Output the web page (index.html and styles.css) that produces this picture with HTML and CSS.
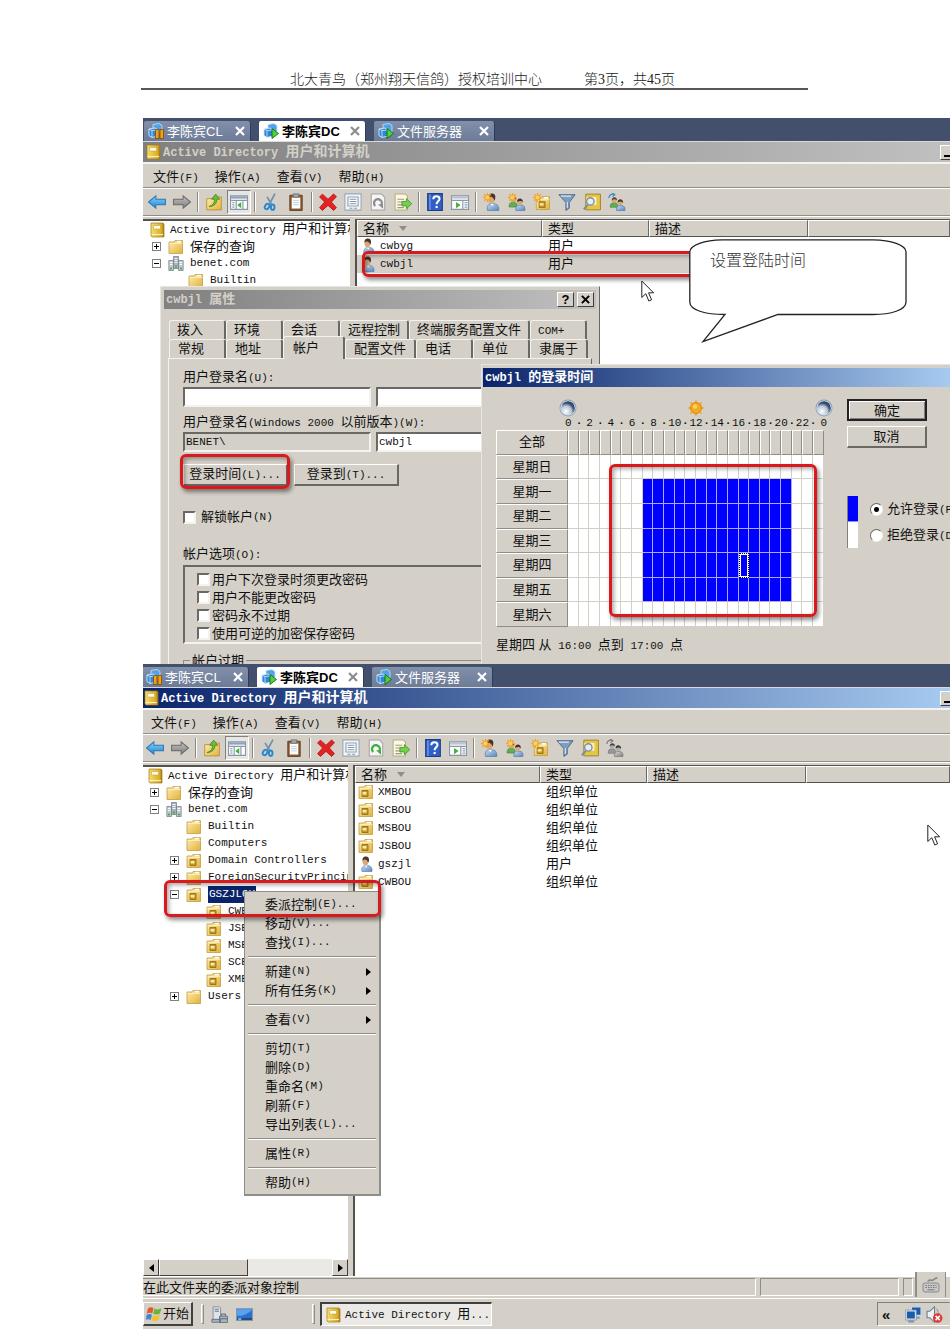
FILE: index.html
```html
<!DOCTYPE html>
<html lang="zh-CN">
<head>
<meta charset="utf-8">
<title>北大青鸟（郑州翔天信鸽）授权培训中心</title>
<link rel="stylesheet" href="styles.css">
</head>
<body>
<svg class="sprite" aria-hidden="true">
  <defs>
    <linearGradient id="gGold" x1="0" y1="0" x2="1" y2="1"><stop offset="0" stop-color="#fdeeb0"/><stop offset="1" stop-color="#e2b23c"/></linearGradient>
    <linearGradient id="gBook" x1="0" y1="0" x2="1" y2="0"><stop offset="0" stop-color="#f5dd6a"/><stop offset=".8" stop-color="#dcae2c"/><stop offset="1" stop-color="#a87a10"/></linearGradient>
    <linearGradient id="gBlue" x1="0" y1="0" x2="0" y2="1"><stop offset="0" stop-color="#8ad4fb"/><stop offset="1" stop-color="#1f83d4"/></linearGradient>
    <linearGradient id="gGray" x1="0" y1="0" x2="0" y2="1"><stop offset="0" stop-color="#c4c4c4"/><stop offset="1" stop-color="#7c7c7c"/></linearGradient>
    <linearGradient id="gBody" x1="0" y1="0" x2="1" y2="1"><stop offset="0" stop-color="#c6dcf4"/><stop offset="1" stop-color="#5a86bd"/></linearGradient>
    <radialGradient id="gMoon" cx=".35" cy=".75" r=".8"><stop offset="0" stop-color="#fff"/><stop offset=".5" stop-color="#b8c3d2"/><stop offset=".75" stop-color="#3c5478"/><stop offset="1" stop-color="#22375a"/></radialGradient>
  </defs>
  <symbol id="cubes" viewBox="0 0 16 16">
    <path d="M5 1.500l6-1 3 2v6l-6 1-3-2z" fill="#4fa3e6" stroke="#c9e7fb" stroke-width=".8"/>
    <path d="M1 6l6-1 3 2v6l-6 1.500-3-2z" fill="#2f86d8" stroke="#d3ecfc" stroke-width=".9"/>
    <path d="M1 6l3 1.500 6-.5M4 7.500v7" fill="none" stroke="#d3ecfc" stroke-width=".8"/>
  </symbol>
  <symbol id="vm-pause" viewBox="0 0 16 16"><use href="#cubes"/><path d="M7.500 6.500h3.500v9h-3.500zM12 6.500h3.500v9h-3.500z" fill="#f2a01c" stroke="#7d4a02" stroke-width=".8"/></symbol>
  <symbol id="vm-play" viewBox="0 0 16 16"><use href="#cubes"/><path d="M9 5.500l6.500 5-6.500 5z" fill="#4fd23c" stroke="#176a10" stroke-width=".9"/></symbol>
  <symbol id="close" viewBox="0 0 10 10"><path d="M1 1l8 8M9 1l-8 8" stroke="currentColor" stroke-width="2.200"/></symbol>
  <symbol id="book" viewBox="0 0 16 16"><path d="M2 1h12l1 1v13H3l-1-1z" fill="url(#gBook)" stroke="#a07a1a" stroke-width=".7"/><path d="M2.500 12.500h11.500" stroke="#fff2b8"/><path d="M4.500 3.500h7v3.500h-7z" fill="#fffce8" stroke="#c8a544" stroke-width=".6"/></symbol>
  <symbol id="folder" viewBox="0 0 16 16"><path d="M1 3h5l1-1.500h7.500V14.500H1z" fill="url(#gGold)" stroke="#c79a3d" stroke-width=".8"/><path d="M9 1.800h4v1.700H9z" fill="#fff"/><path d="M1.500 4.500h13" stroke="#fff5cd" stroke-width=".7"/></symbol>
  <symbol id="ou" viewBox="0 0 16 16"><use href="#folder"/><path d="M4 6.500h6v6H4z" fill="#c69826" stroke="#8d6813" stroke-width=".8"/><path d="M4.500 8h4v2.500h-4z" fill="#fbe9a4"/></symbol>
  <symbol id="domain" viewBox="0 0 16 16"><path d="M5.500.5h5v12h-5z" fill="#a7b0ba" stroke="#6d7884" stroke-width=".7"/><path d="M.8 4.500h4.700v10H.8zM10.500 4.500h4.700v10h-4.700z" fill="#c2c9d1" stroke="#6d7884" stroke-width=".7"/><path d="M6.500 2.500h3M6.500 4.500h3M6.500 6.500h3M1.800 6.500h2.700M1.800 8.500h2.700M11.500 6.500h2.700M11.500 8.500h2.700" stroke="#fff" stroke-width=".9"/><path d="M2 11.500h2v2H2zM7 9.500h2v2H7zM12 11.500h2v2h-2z" fill="#46b548"/></symbol>
  <symbol id="user" viewBox="0 0 16 16"><path d="M4 15.500c-1-4 1-6.500 5-6 4 0 5.500 2.500 5 6z" fill="url(#gBody)" stroke="#4e77a8" stroke-width=".6"/><path d="M6.500 9.500l2 2L9.500 9.500z" fill="#fff"/><ellipse cx="7.500" cy="5.500" rx="2.900" ry="3.700" fill="#d9a877"/><path d="M4.700 5C4 1.500 6 .3 8.300.4c3 .2 3.300 3.600 2 6.200-.8-1-.9-2.800-3.300-3-.8 0-1.600.4-2.300 1.400z" fill="#4a3626"/></symbol>
  <symbol id="group" viewBox="0 0 16 16"><path d="M1 12.500c-.3-3 1-4.500 4-4.300 2.500 0 3.500 1.500 3 4.300z" fill="#5fae52" stroke="#3e7c38" stroke-width=".5"/><circle cx="4.800" cy="6" r="2.300" fill="#d9a877"/><path d="M2.500 6c0-4 5-4 5 0C6 4.500 4 4.500 2.500 6z" fill="#57402c"/><path d="M7 15.500c-.3-3.500 1-5 4.300-4.700 3 0 4.200 1.700 3.700 4.700z" fill="url(#gBody)" stroke="#4e77a8" stroke-width=".6"/><circle cx="10.500" cy="8" r="2.400" fill="#d9a877"/><path d="M8 8c0-4.300 5.500-4 5.300.3-1.300-1.600-3.300-1.700-5.300-.3z" fill="#4a3020"/></symbol>
  <symbol id="spark" viewBox="0 0 16 16"><path d="M4 0v8M0 4h8M1.200 1.200l5.600 5.600M6.800 1.200L1.200 6.800" stroke="#f0a32b" stroke-width="1.200"/><circle cx="4" cy="4" r="1.700" fill="#ffd257"/></symbol>
  <symbol id="new-user" viewBox="0 0 16 16"><use href="#user"/><use href="#spark"/></symbol>
  <symbol id="new-group" viewBox="0 0 16 16"><use href="#group"/><use href="#spark"/></symbol>
  <symbol id="new-ou" viewBox="0 0 16 16"><svg x="2" y="2" width="14" height="14" viewBox="0 0 16 16"><use href="#ou"/></svg><use href="#spark"/></symbol>
  <symbol id="add-group" viewBox="0 0 16 16"><svg x="1" y="1" width="15" height="15" viewBox="0 0 16 16"><use href="#group"/></svg><path d="M.8 4.500C1 1.500 3 .8 5 1.200M3.800 0L6 1.500 4 3.200" fill="none" stroke="#3d86c4" stroke-width="1.100"/></symbol>
  <symbol id="back" viewBox="0 0 16 16"><path d="M.5 8L7 2.500v3h8.500v5H7v3z" fill="url(#gBlue)" stroke="#2b78b5" stroke-width=".9"/></symbol>
  <symbol id="forward" viewBox="0 0 16 16"><path d="M15.500 8L9 2.500v3H.5v5H9v3z" fill="url(#gGray)" stroke="#6b6b6b" stroke-width=".9"/></symbol>
  <symbol id="up" viewBox="0 0 16 16"><path d="M1.500 5h5l1-1.500h7V15h-13z" fill="url(#gGold)" stroke="#b98f35" stroke-width=".8"/><path d="M3.500 12c3.500-1 5-3 5-6.500H6L9.500 1 13 5.500h-2.300C10.500 9.500 8 12 3.500 12z" fill="#6cbd3a" stroke="#3d7f1e" stroke-width=".7"/></symbol>
  <symbol id="console" viewBox="0 0 16 16"><path d="M.5 2.500h15v12H.5z" fill="#fff" stroke="#8797a8"/><path d="M1 3h14v2H1z" fill="#8ea2b8"/><path d="M1 6.500h14M5.500 7v7.500M11.500 7v7.500" stroke="#8797a8"/><path d="M2 8.500h2M2 10.500h2M2 12.500h2" stroke="#8ea2b8"/><path d="M10 8v5.500L6.500 10.700z" fill="#43ae3a"/></symbol>
  <symbol id="action" viewBox="0 0 16 16"><path d="M.5 2.500h15v12H.5z" fill="#fff" stroke="#8797a8"/><path d="M1 3h14v2H1z" fill="#b9c5d1"/><path d="M1 6.500h14M10.500 7v7.500" stroke="#8797a8"/><path d="M12 8.500h2.500M12 10.500h2.500M12 12.500h2.500" stroke="#8ea2b8"/><path d="M4.500 8v5.500L8.500 10.700z" fill="#43ae3a"/></symbol>
  <symbol id="cut" viewBox="0 0 16 16"><path d="M11.500.5L6.500 10M4.500 3.500L9 11" stroke="#6f8fae" stroke-width="1.500"/><ellipse cx="4.500" cy="12" rx="1.800" ry="2.600" fill="none" stroke="#2788cf" stroke-width="1.700" transform="rotate(30 4.500 12)"/><ellipse cx="9.500" cy="12.600" rx="1.600" ry="2.400" fill="none" stroke="#2788cf" stroke-width="1.700"/></symbol>
  <symbol id="paste" viewBox="0 0 16 16"><path d="M2.500 2h11v13.500h-11z" fill="#8b5a34" stroke="#5f3b1f" stroke-width=".8"/><path d="M4.200 4h7.600v9.800H4.200z" fill="#fff"/><path d="M5.500.8h5v3h-5z" fill="#a8a8a8" stroke="#666" stroke-width=".7"/><path d="M5.500 6.500h5M5.500 8.500h5M5.500 10.500h5" stroke="#b8c4d0" stroke-width=".8"/></symbol>
  <symbol id="delete" viewBox="0 0 16 16"><path d="M3 1l5 4.500L13 .8l2.500 2.500L11 8l4.500 5-2.500 2.500L8 11l-5 4.500L.5 13 5 8 .5 3.500z" fill="#e32222" stroke="#b01010" stroke-width=".7"/></symbol>
  <symbol id="props" viewBox="0 0 16 16"><path d="M.8.8h14.400v14.400H.8z" fill="#f2f5f8" stroke="#9aa9b8"/><path d="M3.500 3.500h9v8h-9z" fill="#fff" stroke="#8fa0b2"/><path d="M5 5.500h6M5 7.500h6M5 9.500h6" stroke="#7e95ad"/><path d="M5 13.500h2.500M9 13.500h2.500" stroke="#8797a8"/></symbol>
  <symbol id="refresh" viewBox="0 0 16 16"><path d="M2 .8h9l3 3v11.400H2z" fill="#f5f5f5" stroke="#a4a4a4" stroke-width=".9"/><path d="M5.500 11.500a3.500 3.500 0 1 1 5.300-.5" fill="none" stroke="currentColor" stroke-width="2"/><path d="M8 10h4.500v4z" fill="currentColor"/></symbol>
  <symbol id="export" viewBox="0 0 16 16"><path d="M1 .8h9l2 2v12.400H1z" fill="#fdf8df" stroke="#b5ac86" stroke-width=".9"/><path d="M3 5.500h6M3 8h4M3 10.500h4M3 13h6" stroke="#9a9a8a"/><path d="M7 7.500h4V5l4.800 4.500L11 14v-2.500H7z" fill="#76cf4a" stroke="#3d8f22" stroke-width=".7"/></symbol>
  <symbol id="help" viewBox="0 0 16 16"><path d="M1.500.5h13v15h-13z" fill="#2f5fc4" stroke="#1c3c8c"/><path d="M3.500 1v14" stroke="#85a8ee"/><path d="M6.500 5.500c0-3.500 5.500-3.300 5.500-.2 0 2-2.600 2.200-2.600 4.700" fill="none" stroke="#fff" stroke-width="1.800"/><path d="M8.500 11.500h1.900v1.900H8.500z" fill="#fff"/></symbol>
  <symbol id="filter" viewBox="0 0 16 16"><path d="M.8 1.500h14.400L10 8.500v5L7 15.500v-7z" fill="#7d9dc2" stroke="#4a6585" stroke-width=".8"/><path d="M2.500 2.800h9M8.300 8v5" fill="none" stroke="#dbe8f5"/></symbol>
  <symbol id="find" viewBox="0 0 16 16"><path d="M2.500 1h13v14h-13z" fill="#e5c546" stroke="#9d7f1c" stroke-width=".8"/><path d="M3 3.500h9v7H3z" fill="#f8efc2"/><circle cx="6.500" cy="7.500" r="3.300" fill="#e4eef7" stroke="#7f8c9a" stroke-width="1.200"/><path d="M4 10.500L.8 14.500" stroke="#7f8c9a" stroke-width="1.800"/></symbol>
  <symbol id="moon" viewBox="0 0 18 18"><circle cx="9" cy="9" r="8.500" fill="#8d9db4"/><circle cx="9" cy="9" r="7.600" fill="#dbe2ea"/><circle cx="9" cy="9" r="6.800" fill="url(#gMoon)"/></symbol>
  <symbol id="sun" viewBox="0 0 18 18"><path d="M9 1v16M1 9h16M3.300 3.300l11.400 11.400M14.700 3.300L3.300 14.700" stroke="#e8a940" stroke-width="1.400"/><circle cx="9" cy="9" r="5.500" fill="#f7a91c" stroke="#d98510"/><circle cx="8" cy="7.500" r="2.200" fill="#ffcf63"/></symbol>
  <symbol id="pointer" viewBox="0 0 13 22"><path d="M.8 1v16.500l4-3.800 3 7.300 2.800-1.200-3-7h5z" fill="#fff" stroke="#222" stroke-width="1"/></symbol>
  <symbol id="windows" viewBox="0 0 16 16"><path d="M2 2.500c2-1.500 4-1.500 5.500-.3L6.200 7.500C4.700 6.400 2.700 6.500.7 7.800z" fill="#e8562a"/><path d="M8.500 2.500c2 1.200 4.500 1.200 7-.2L14 7.600C12 9 9.500 8.800 7.200 7.800z" fill="#69b43c"/><path d="M.5 9C2.400 7.700 4.400 7.700 6 8.700L4.700 14C3.200 12.900 1.200 13 0 13.800z" fill="#3f86d8"/><path d="M7 9c2 1.200 4.500 1.400 6.800-.2l-1.300 5.200c-2 1.400-4.500 1.400-6.800.2z" fill="#f5bf2e"/></symbol>
  <symbol id="server" viewBox="0 0 16 16"><path d="M2 .8h6l1 1v11H2z" fill="#dfe4ea" stroke="#7a8795" stroke-width=".8"/><path d="M3.500 3h4M3.500 5h4" stroke="#6a7888"/><path d="M.8 12.500h8v2.800h-8zM8 9.500h7.500v6H8z" fill="#a7b2bf" stroke="#5f6d7c" stroke-width=".8"/><path d="M10 9.500v-2h3.500v2M8 12h7.500" fill="none" stroke="#5f6d7c"/></symbol>
  <symbol id="desktop" viewBox="0 0 16 16"><path d="M.5 2.500h15v11H.5z" fill="#2a6fd0" stroke="#7e97b5"/><path d="M1 9c5 1 9-1 14-5v-1H1z" fill="#5ba2ea"/><path d="M1 11.500h14V13H1z" fill="#27405f"/><path d="M2 11.500h3V13H2z" fill="#7fd4ee"/></symbol>
  <symbol id="keyboard" viewBox="0 0 18 16"><path d="M6 4.500C7 1 10 5 12 2.500s2-1 3.500-1.500" fill="none" stroke="#8a8a8a" stroke-width="1.800"/><rect x="1" y="6" width="16" height="9" rx="2" fill="#c8c8c8" stroke="#8a8a8a"/><path d="M3.500 8.500h11M3.500 10.500h11" stroke="#777" stroke-dasharray="1.500 1"/><path d="M5.500 12.800h7" stroke="#777"/></symbol>
  <symbol id="network" viewBox="0 0 16 16"><path d="M6 .8h9.200v8H6z" fill="#1a5ca8" stroke="#c9d6e4" stroke-width="1.300"/><path d="M9 11h5" stroke="#93a2b2" stroke-width="2"/><path d="M1 4.500h9v8H1z" fill="#1a5ca8" stroke="#dbe5ef" stroke-width="1.500"/><path d="M.3 3.800h10.400v9.400H.3z" fill="none" stroke="#6f8296" stroke-width=".6"/><path d="M3 14.500h5.500" stroke="#8090a0" stroke-width="2"/></symbol>
  <symbol id="mute" viewBox="0 0 16 16"><path d="M1 5h2.500L8 .8v14.400L3.500 11H1z" fill="#eef2f6" stroke="#6c7b8a"/><path d="M10 2.500c1.500 2 1.800 4 1.800 6" fill="none" stroke="#8b9aa9"/><circle cx="11" cy="11.300" r="4.500" fill="#dd3a31"/><path d="M9 9.300l4 4M13 9.300l-4 4" stroke="#fff" stroke-width="1.400"/></symbol>
</svg>

<header class="page-header">
  <span>北大青鸟（郑州翔天信鸽）授权培训中心</span>
  <span>第3页，共45页</span>
</header>

<main class="captures">
  <section class="capture">
    <div class="app">
      <nav class="vm-tabs">
        <div class="vm-tab"><svg class="ico"><use href="#vm-pause"/></svg><span>李陈宾CL</span><button class="vm-close" aria-label="关闭"><svg><use href="#close"/></svg></button></div>
        <div class="vm-tab vm-tab--active"><svg class="ico"><use href="#vm-play"/></svg><span>李陈宾DC</span><button class="vm-close" aria-label="关闭"><svg><use href="#close"/></svg></button></div>
        <div class="vm-tab vm-tab--wide"><svg class="ico"><use href="#vm-play"/></svg><span>文件服务器</span><button class="vm-close" aria-label="关闭"><svg><use href="#close"/></svg></button></div>
      </nav>
      <div class="titlebar titlebar--inactive">
        <svg class="ico"><use href="#book"/></svg>
        <h2 class="title"><span class="m">Active Directory </span>用户和计算机</h2>
        <button class="win-btn win-btn--min" aria-label="最小化"></button>
      </div>
      <div class="menubar">
        <button>文件<span class="m">(F)</span></button><button>操作<span class="m">(A)</span></button><button>查看<span class="m">(V)</span></button><button>帮助<span class="m">(H)</span></button>
      </div>
      <div class="toolbar">
        <button aria-label="后退"><svg><use href="#back"/></svg></button><button aria-label="前进"><svg><use href="#forward"/></svg></button><i class="sep"></i>
        <button aria-label="上一级"><svg><use href="#up"/></svg></button><button class="pressed" aria-label="控制台树"><svg><use href="#console"/></svg></button><i class="sep"></i>
        <button aria-label="剪切"><svg><use href="#cut"/></svg></button><button aria-label="粘贴"><svg><use href="#paste"/></svg></button><i class="sep"></i>
        <button aria-label="删除"><svg><use href="#delete"/></svg></button><button aria-label="属性"><svg><use href="#props"/></svg></button><button class="refresh-off" aria-label="刷新"><svg><use href="#refresh"/></svg></button><button aria-label="导出"><svg><use href="#export"/></svg></button><i class="sep"></i>
        <button aria-label="帮助"><svg><use href="#help"/></svg></button><button aria-label="操作窗格"><svg><use href="#action"/></svg></button><i class="sep"></i>
        <button aria-label="新建用户"><svg><use href="#new-user"/></svg></button><button aria-label="新建组"><svg><use href="#new-group"/></svg></button><button aria-label="新建组织单位"><svg><use href="#new-ou"/></svg></button><button aria-label="筛选"><svg><use href="#filter"/></svg></button><button aria-label="查找"><svg><use href="#find"/></svg></button><button aria-label="添加到组"><svg><use href="#add-group"/></svg></button>
      </div>
      <div class="workspace workspace--short">
        <div class="tree-pane">
          <div class="row row--root"><svg class="ico"><use href="#book"/></svg><span><span class="m">Active Directory </span>用户和计算机</span></div>
          <ul class="tree">
            <li><div class="row"><i class="exp exp--plus"></i><svg class="ico"><use href="#folder"/></svg><span>保存的查询</span></div></li>
            <li><div class="row"><i class="exp"></i><svg class="ico"><use href="#domain"/></svg><span class="m">benet.com</span></div>
              <ul><li><div class="row"><i class="exp exp--none"></i><svg class="ico"><use href="#folder"/></svg><span class="m">Builtin</span></div></li></ul>
            </li>
          </ul>
        </div>
        <div class="list-pane">
          <table class="list">
            <colgroup><col class="c-name"><col class="c-type"><col class="c-desc"><col></colgroup>
            <thead><tr><th>名称<i class="sort"></i></th><th>类型</th><th>描述</th><th></th></tr></thead>
            <tbody>
              <tr><td><div class="cell"><svg class="ico"><use href="#user"/></svg><span class="m">cwbyg</span></div></td><td>用户</td><td></td><td></td></tr>
              <tr class="is-dim"><td><div class="cell"><svg class="ico"><use href="#user"/></svg><span class="m">cwbjl</span></div></td><td>用户</td><td></td><td></td></tr>
            </tbody>
          </table>
        </div>
      </div>
    </div>

    <div class="mark mark--user"></div>
    <svg class="pointer pointer--one"><use href="#pointer"/></svg>
    <div class="callout">
      <svg viewBox="0 0 218 104"><path d="M33 .8H184C202 1 217 6 217 13V63C217 71 202 75.500 184 75.500H89L14 102.500 36 75.500C16 75.500 .8 71 .8 63V13C.8 6 16 1 33 .8z" fill="#fff" stroke="#222" stroke-width="1.300"/></svg>
      <p>设置登陆时间</p>
    </div>

    <section class="dialog dialog--props">
      <div class="dialog-title dialog-title--inactive">
        <h3 class="title"><span class="m">cwbjl </span>属性</h3>
        <button class="win-btn" aria-label="帮助">?</button><button class="win-btn" aria-label="关闭"><svg><use href="#close"/></svg></button>
      </div>
      <div class="tabs">
        <div class="tab-row"><button>拨入</button><button>环境</button><button>会话</button><button>远程控制</button><button>终端服务配置文件</button><button><span class="m">COM+</span></button></div>
        <div class="tab-row tab-row--front"><button>常规</button><button>地址</button><button class="active">帐户</button><button>配置文件</button><button>电话</button><button>单位</button><button>隶属于</button></div>
      </div>
      <form class="panel">
        <label for="upn">用户登录名<span class="m">(U):</span></label>
        <div class="fields"><input id="upn" type="text"><input type="text" aria-label="域后缀"></div>
        <label class="gap-s" for="sam">用户登录名<span class="m">(Windows 2000 </span>以前版本<span class="m">)(W):</span></label>
        <div class="fields"><input class="readonly" type="text" value="BENET\" aria-label="域" readonly><input id="sam" type="text" value="cwbjl"></div>
        <div class="buttons"><button type="button" class="btn">登录时间<span class="m">(L)...</span></button><button type="button" class="btn">登录到<span class="m">(T)...</span></button></div>
        <label class="check gap-l"><input type="checkbox">解锁帐户<span class="m">(N)</span></label>
        <span class="group-label">帐户选项<span class="m">(O):</span></span>
        <div class="options">
          <label class="check"><input type="checkbox">用户下次登录时须更改密码</label>
          <label class="check"><input type="checkbox">用户不能更改密码</label>
          <label class="check"><input type="checkbox">密码永不过期</label>
          <label class="check"><input type="checkbox">使用可逆的加密保存密码</label>
        </div>
        <fieldset><legend>帐户过期</legend></fieldset>
      </form>
      <div class="mark mark--hours"></div>
    </section>

    <section class="dialog dialog--hours">
      <div class="dialog-title"><h3 class="title"><span class="m">cwbjl </span>的登录时间</h3></div>
      <div class="hours">
        <div class="schedule">
          <div class="sky"><svg><use href="#moon"/></svg><svg><use href="#sun"/></svg><svg><use href="#moon"/></svg></div>
          <div class="scale" id="scale"></div>
          <table class="grid" id="grid"></table>
          <p class="range">星期四 从<span class="m"> 16:00 </span>点到<span class="m"> 17:00 </span>点</p>
          <div class="mark mark--grid"></div>
        </div>
        <div class="side">
          <button class="btn btn--default">确定</button>
          <button class="btn">取消</button>
          <div class="legend">
            <label><i class="swatch swatch--on"></i><input type="radio" name="allow" checked><span>允许登录<span class="m">(P)</span></span></label>
            <label><i class="swatch"></i><input type="radio" name="allow"><span>拒绝登录<span class="m">(D)</span></span></label>
          </div>
        </div>
      </div>
    </section>
  </section>

  <section class="capture capture--second">
    <div class="app">
      <nav class="vm-tabs">
        <div class="vm-tab"><svg class="ico"><use href="#vm-pause"/></svg><span>李陈宾CL</span><button class="vm-close" aria-label="关闭"><svg><use href="#close"/></svg></button></div>
        <div class="vm-tab vm-tab--active"><svg class="ico"><use href="#vm-play"/></svg><span>李陈宾DC</span><button class="vm-close" aria-label="关闭"><svg><use href="#close"/></svg></button></div>
        <div class="vm-tab vm-tab--wide"><svg class="ico"><use href="#vm-play"/></svg><span>文件服务器</span><button class="vm-close" aria-label="关闭"><svg><use href="#close"/></svg></button></div>
      </nav>
      <div class="titlebar">
        <svg class="ico"><use href="#book"/></svg>
        <h2 class="title"><span class="m">Active Directory </span>用户和计算机</h2>
        <button class="win-btn win-btn--min" aria-label="最小化"></button>
      </div>
      <div class="menubar">
        <button>文件<span class="m">(F)</span></button><button>操作<span class="m">(A)</span></button><button>查看<span class="m">(V)</span></button><button>帮助<span class="m">(H)</span></button>
      </div>
      <div class="toolbar">
        <button aria-label="后退"><svg><use href="#back"/></svg></button><button aria-label="前进"><svg><use href="#forward"/></svg></button><i class="sep"></i>
        <button aria-label="上一级"><svg><use href="#up"/></svg></button><button class="pressed" aria-label="控制台树"><svg><use href="#console"/></svg></button><i class="sep"></i>
        <button aria-label="剪切"><svg><use href="#cut"/></svg></button><button aria-label="粘贴"><svg><use href="#paste"/></svg></button><i class="sep"></i>
        <button aria-label="删除"><svg><use href="#delete"/></svg></button><button aria-label="属性"><svg><use href="#props"/></svg></button><button class="refresh-on" aria-label="刷新"><svg><use href="#refresh"/></svg></button><button aria-label="导出"><svg><use href="#export"/></svg></button><i class="sep"></i>
        <button aria-label="帮助"><svg><use href="#help"/></svg></button><button aria-label="操作窗格"><svg><use href="#action"/></svg></button><i class="sep"></i>
        <button aria-label="新建用户"><svg><use href="#new-user"/></svg></button><button aria-label="新建组"><svg><use href="#new-group"/></svg></button><button aria-label="新建组织单位"><svg><use href="#new-ou"/></svg></button><button aria-label="筛选"><svg><use href="#filter"/></svg></button><button aria-label="查找"><svg><use href="#find"/></svg></button><button class="disabled" aria-label="添加到组" disabled><svg><use href="#add-group"/></svg></button>
      </div>
      <div class="workspace workspace--tall">
        <div class="tree-pane">
          <div class="row row--root"><svg class="ico"><use href="#book"/></svg><span><span class="m">Active Directory </span>用户和计算机</span></div>
          <ul class="tree">
            <li><div class="row"><i class="exp exp--plus"></i><svg class="ico"><use href="#folder"/></svg><span>保存的查询</span></div></li>
            <li><div class="row"><i class="exp"></i><svg class="ico"><use href="#domain"/></svg><span class="m">benet.com</span></div>
              <ul>
                <li><div class="row"><i class="exp exp--none"></i><svg class="ico"><use href="#folder"/></svg><span class="m">Builtin</span></div></li>
                <li><div class="row"><i class="exp exp--none"></i><svg class="ico"><use href="#folder"/></svg><span class="m">Computers</span></div></li>
                <li><div class="row"><i class="exp exp--plus"></i><svg class="ico"><use href="#ou"/></svg><span class="m">Domain Controllers</span></div></li>
                <li><div class="row"><i class="exp exp--plus"></i><svg class="ico"><use href="#folder"/></svg><span class="m">ForeignSecurityPrincip</span></div></li>
                <li><div class="row"><i class="exp"></i><svg class="ico"><use href="#ou"/></svg><span class="m selected">GSZJLOU</span></div>
                  <ul>
                    <li><div class="row"><i class="exp exp--none"></i><svg class="ico"><use href="#ou"/></svg><span class="m">CWBOU</span></div></li>
                    <li><div class="row"><i class="exp exp--none"></i><svg class="ico"><use href="#ou"/></svg><span class="m">JSBOU</span></div></li>
                    <li><div class="row"><i class="exp exp--none"></i><svg class="ico"><use href="#ou"/></svg><span class="m">MSBOU</span></div></li>
                    <li><div class="row"><i class="exp exp--none"></i><svg class="ico"><use href="#ou"/></svg><span class="m">SCBOU</span></div></li>
                    <li><div class="row"><i class="exp exp--none"></i><svg class="ico"><use href="#ou"/></svg><span class="m">XMBOU</span></div></li>
                  </ul>
                </li>
                <li><div class="row"><i class="exp exp--plus"></i><svg class="ico"><use href="#folder"/></svg><span class="m">Users</span></div></li>
              </ul>
            </li>
          </ul>
          <div class="scrollbar">
            <button aria-label="向左"><i class="arrow arrow--left"></i></button><i class="thumb"></i><button class="end" aria-label="向右"><i class="arrow"></i></button>
          </div>
        </div>
        <div class="list-pane">
          <table class="list">
            <colgroup><col class="c-name"><col class="c-type"><col class="c-desc"><col></colgroup>
            <thead><tr><th>名称<i class="sort"></i></th><th>类型</th><th>描述</th><th></th></tr></thead>
            <tbody>
              <tr><td><div class="cell"><svg class="ico"><use href="#ou"/></svg><span class="m">XMBOU</span></div></td><td>组织单位</td><td></td><td></td></tr>
              <tr><td><div class="cell"><svg class="ico"><use href="#ou"/></svg><span class="m">SCBOU</span></div></td><td>组织单位</td><td></td><td></td></tr>
              <tr><td><div class="cell"><svg class="ico"><use href="#ou"/></svg><span class="m">MSBOU</span></div></td><td>组织单位</td><td></td><td></td></tr>
              <tr><td><div class="cell"><svg class="ico"><use href="#ou"/></svg><span class="m">JSBOU</span></div></td><td>组织单位</td><td></td><td></td></tr>
              <tr><td><div class="cell"><svg class="ico"><use href="#user"/></svg><span class="m">gszjl</span></div></td><td>用户</td><td></td><td></td></tr>
              <tr><td><div class="cell"><svg class="ico"><use href="#ou"/></svg><span class="m">CWBOU</span></div></td><td>组织单位</td><td></td><td></td></tr>
            </tbody>
          </table>
        </div>
      </div>
      <footer class="statusbar">
        <span class="status-text">在此文件夹的委派对象控制</span><span class="status-mid"></span><span class="status-end"></span>
        <button class="ime" aria-label="输入法"><svg><use href="#keyboard"/></svg></button>
      </footer>
      <div class="taskbar">
        <button class="start"><svg class="ico"><use href="#windows"/></svg>开始</button>
        <i class="grip"></i>
        <div class="quick"><button aria-label="服务器管理器"><svg><use href="#server"/></svg></button><button aria-label="显示桌面"><svg><use href="#desktop"/></svg></button></div>
        <i class="grip"></i>
        <button class="task"><svg class="ico"><use href="#book"/></svg><span><span class="m">Active Directory </span>用<span class="m">...</span></span></button>
        <div class="tray"><span class="chev">«</span><svg class="net"><use href="#network"/></svg><svg><use href="#mute"/></svg></div>
      </div>
    </div>
    <svg class="pointer pointer--two"><use href="#pointer"/></svg>
    <menu class="context">
      <li><button>委派控制<span class="m">(E)...</span></button></li>
      <li><button>移动<span class="m">(V)...</span></button></li>
      <li><button>查找<span class="m">(I)...</span></button></li>
      <li class="rule"></li>
      <li><button>新建<span class="m">(N)</span><i class="arrow"></i></button></li>
      <li><button>所有任务<span class="m">(K)</span><i class="arrow"></i></button></li>
      <li class="rule"></li>
      <li><button>查看<span class="m">(V)</span><i class="arrow"></i></button></li>
      <li class="rule"></li>
      <li><button>剪切<span class="m">(T)</span></button></li>
      <li><button>删除<span class="m">(D)</span></button></li>
      <li><button>重命名<span class="m">(M)</span></button></li>
      <li><button>刷新<span class="m">(F)</span></button></li>
      <li><button>导出列表<span class="m">(L)...</span></button></li>
      <li class="rule"></li>
      <li><button>属性<span class="m">(R)</span></button></li>
      <li class="rule"></li>
      <li><button>帮助<span class="m">(H)</span></button></li>
    </menu>
    <div class="mark mark--delegate"></div>
  </section>
</main>
<script src="schedule.js"></script>
</body>
</html>
```
FILE: styles.css
```css
* { box-sizing: border-box; }

:root {
  --face: #d4d0c8;
  --shade: #808080;
  --dark: #404040;
  --ui: "Liberation Sans", "Noto Sans CJK SC", sans-serif;
  --mono: "Liberation Mono", "Noto Sans CJK SC", monospace;
}

body {
  margin: 0;
  background: #fff;
  color: #111;
  font: 13px/17px var(--ui);
}

button, input { font: inherit; color: inherit; }
button { margin: 0; padding: 0; border: 0; background: none; white-space: nowrap; }
ul, menu { margin: 0; padding: 0; list-style: none; }
p, h2, h3 { margin: 0; }
svg { display: block; flex: none; }

.sprite { position: absolute; width: 0; height: 0; }
.ico { width: 16px; height: 16px; }
.m { font-family: var(--mono); font-size: 11px; white-space: pre; }

.page-header {
  display: flex;
  justify-content: center;
  gap: 42px;
  margin: 71px 142px 28px 141px;
  padding-left: 16px;
  border-bottom: 2px solid #5a5658;
  font: 14px/17px "Liberation Serif", "Noto Sans CJK SC", serif;
  font-weight: 300;
  color: #222;
}

.captures { margin-left: 143px; padding-bottom: 15px; }
.capture { position: relative; overflow: hidden; }
.app { background: var(--face); }
.capture--second .app { margin-left: -2px; }

/* virtual machine tabs */
.vm-tabs {
  display: flex;
  gap: 8px;
  height: 23px;
  padding: 3px 1px 0;
  background: #42506e;
}
.vm-tab {
  display: flex;
  align-items: center;
  width: 107px;
  padding: 0 5px 0 4px;
  gap: 3px;
  border-radius: 2px 3px 0 0;
  background: linear-gradient(#8290aa, #6c7b97);
  border-right: 1px solid #2f3c58;
  color: #fff;
  white-space: nowrap;
}
.vm-tab--active { background: #fff; color: #000; font-weight: bold; }
.vm-tab--wide { width: 121px; }
.vm-close { margin-left: auto; }
.vm-close svg { width: 10px; height: 10px; }
.vm-tab--active .vm-close { color: #8c8c8c; }

.titlebar {
  display: flex;
  align-items: center;
  gap: 2px;
  height: 21px;
  padding-left: 2px;
  border-top: 1px solid #dcdad6;
  background: linear-gradient(90deg, #0a246a, #a6caf0);
  color: #fff;
}
.titlebar--inactive { background: linear-gradient(90deg, #808080, #c0c0c0); color: var(--face); }
.title { flex: 1; font-size: 14px; font-weight: bold; white-space: nowrap; }
.title .m { font-size: 12px; }

.win-btn {
  display: grid;
  place-items: center;
  width: 17px;
  height: 15px;
  border: 1px solid;
  border-color: #fff var(--dark) var(--dark) #fff;
  background: var(--face);
  color: #000;
  font-weight: bold;
  line-height: 13px;
}
.win-btn svg { width: 9px; height: 9px; }
.win-btn--min { margin-right: -7px; place-items: end start; }
.win-btn--min::before { content: ""; width: 7px; height: 2px; margin: 0 0 2px 3px; background: #000; }

.menubar {
  display: flex;
  align-items: center;
  gap: 16px;
  height: 26px;
  padding: 3px 0 0 10px;
  border-top: 2px solid #f4f2ee;
  border-bottom: 1px solid #8f8d88;
}

.toolbar {
  display: flex;
  align-items: center;
  gap: 1px;
  height: 28px;
  padding-left: 2px;
  border-top: 1px solid #fff;
  border-bottom: 1px solid #8f8d88;
}
.toolbar button { display: grid; place-items: center; width: 24px; height: 24px; }
.toolbar svg { width: 18px; height: 18px; }
.toolbar .pressed { border: 1px solid; border-color: var(--shade) #fff #fff var(--shade); background: #e8e6e2; }
.toolbar .disabled { filter: grayscale(1); }
.refresh-off { color: #8c8c8c; }
.refresh-on { color: #3fae3a; }
.sep { width: 6px; height: 20px; border: 2px solid transparent; border-width: 0 2px; background: linear-gradient(90deg, #8a8884 50%, #fff 50%); background-clip: padding-box; background-origin: padding-box; }

/* tree and list */
.workspace { display: flex; gap: 5px; padding-top: 2px; border-top: 1px solid #fff; background: var(--face); }
.workspace--short { min-height: 448px; }
.workspace--tall { min-height: 514px; }
.tree-pane {
  display: flex;
  flex-direction: column;
  flex: none;
  width: 207px;
  overflow: hidden;
  border-top: 2px solid #55524e;
  background: #fff;
}
.row { display: flex; align-items: center; height: 17px; padding-left: 9px; white-space: nowrap; }
.row--root { padding-left: 6px; gap: 5px; }
.tree { flex: 1; }
.tree ul { padding-left: 20px; }
.tree .ico { margin: 0 6px 0 7px; }
.exp {
  flex: none;
  width: 9px;
  height: 9px;
  border: 1px solid #808080;
  background: linear-gradient(#000, #000) center / 5px 1px no-repeat;
}
.exp--plus { background: linear-gradient(#000, #000) center / 5px 1px no-repeat, linear-gradient(#000, #000) center / 1px 5px no-repeat; }
.exp--none { visibility: hidden; }
.selected { padding: 0 1px; background: #0a246a; color: #fff; }

.list-pane { flex: 1; min-width: 0; border: 2px solid #55524e; border-width: 1px 0 0 2px; background: #fff; }
.list { width: 100%; table-layout: fixed; border-collapse: separate; border-spacing: 0; }
.c-name { width: 185px; }
.c-type { width: 107px; }
.c-desc { width: 159px; }
.list th {
  height: 17px;
  padding: 0 0 0 5px;
  border: 1px solid;
  border-color: #fff #6a6864 #55524e #fff;
  background: var(--face);
  font-weight: normal;
  line-height: 15px;
  text-align: left;
}
.list td { height: 18px; padding: 0 0 0 6px; line-height: 18px; }
.list td:first-child { padding-left: 3px; }
.cell { display: flex; align-items: center; gap: 4px; height: 18px; }
.sort { display: inline-block; margin-left: 10px; border: 4px solid transparent; border-top: 5px solid #8f8d88; border-bottom: 0; vertical-align: 2px; }
.is-dim td:not(:last-child) { background: var(--face); }

.scrollbar { display: flex; height: 17px; margin-left: 2px; background: #ebe9e5; }
.scrollbar button, .thumb {
  display: grid;
  place-items: center;
  width: 16px;
  border: 1px solid;
  border-color: #fff var(--dark) var(--dark) #fff;
  background: var(--face);
}
.thumb { width: 89px; }
.scrollbar .end { margin-left: auto; }
.arrow { border: 4px solid transparent; border-left: 5px solid #000; border-right: 0; }
.arrow--left { border: 4px solid transparent; border-right: 5px solid #000; border-left: 0; }

/* overlays */
.mark { position: absolute; border: 3px solid #d9191c; border-radius: 6px; box-shadow: 2px 3px 4px rgba(0, 0, 0, .45), inset 2px 2px 4px rgba(0, 0, 0, .35); pointer-events: none; }
.mark--user { left: 219px; top: 133px; width: 360px; height: 26px; }
.mark--hours { left: 19px; top: 167px; width: 110px; height: 35px; }
.mark--grid { left: 113px; top: 65px; width: 208px; height: 153px; }
.mark--delegate { left: 21px; top: 216px; width: 217px; height: 37px; }
.pointer { position: absolute; width: 13px; height: 22px; }
.pointer--one { left: 498px; top: 162px; }
.pointer--two { left: 784px; top: 160px; }
.callout { position: absolute; left: 546px; top: 121px; width: 218px; color: #333; font: 300 16px/22px "Liberation Serif", "Noto Sans CJK SC", serif; }
.callout svg { width: 100%; }
.callout p { position: absolute; left: 21px; top: 11px; }

/* dialogs */
.dialog {
  position: absolute;
  bottom: 0;
  overflow: hidden;
  padding: 3px 3px 0;
  border: 1px solid;
  border-color: #e8e6e2 #6a6864 transparent #e8e6e2;
  border-bottom: 0;
  background: var(--face);
  white-space: nowrap;
}
.dialog--props { left: 17px; top: 168px; width: 440px; }
.dialog--hours { left: 338px; right: 0; top: 246px; padding: 3px 0 0 1px; border-right: 0; }
.dialog-title { display: flex; align-items: center; gap: 3px; height: 19px; padding: 0 2px; background: linear-gradient(90deg, #0a246a, #a6caf0); color: #fff; }
.dialog-title .title { font-size: 13px; }
.dialog-title--inactive { background: linear-gradient(90deg, #808080, #c0c0c0); color: var(--face); }

.tabs { padding: 11px 0 0 5px; }
.tab-row { display: flex; height: 19px; }
.tab-row button {
  min-width: 57px;
  padding: 0 7px;
  border: 1px solid;
  border-width: 1px 2px 0 1px;
  border-color: #f4f2ee #6a6864 transparent #f4f2ee;
  border-radius: 3px 3px 0 0;
  line-height: 18px;
  text-align: left;
}
.tab-row--front button { padding: 0 8px; }
.tab-row .active { position: relative; min-width: 62px; height: 23px; margin-top: -3px; padding-left: 9px; background: var(--face); }
.panel { margin: 0 4px; padding: 9px 14px 0; border: 1px solid; border-color: #f4f2ee #6a6864 transparent #f4f2ee; }
.panel > label, .group-label { display: block; line-height: 18px; }
.panel .gap-s { margin-top: 6px; }
.fields { display: flex; gap: 5px; }
.fields input {
  flex: 1;
  min-width: 0;
  height: 20px;
  padding: 0 1px 1px;
  border: 2px solid;
  border-color: #6a6864 #f4f2ee #f4f2ee #6a6864;
  background: #fff;
  font: 11px/15px var(--mono);
}
.fields input:first-child { flex: 0 1 188px; }
.fields .readonly { background: var(--face); }
.buttons { display: flex; gap: 6px; margin-top: 12px; }
.btn { width: 105px; height: 22px; border: 2px solid; border-width: 1px 2px 2px 1px; border-color: #fff #6a6864 #6a6864 #fff; background: var(--face); }
.panel .check { display: flex; align-items: center; height: 18px; }
.check input, .legend input { appearance: none; width: 13px; height: 13px; margin: 0 5px 0 0; border: 2px solid; border-color: #6a6864 #f4f2ee #f4f2ee #6a6864; background: #fff; }
.panel .gap-l { margin-top: 22px; }
.group-label { margin-top: 19px; }
.options { padding: 3px 12px 0; border: 2px solid; border-color: #6a6864 #f4f2ee #f4f2ee #6a6864; margin-top: 1px; }
.options .check input { margin-right: 2px; }
fieldset { height: 40px; margin: 8px 0 0; padding: 0; border: 1px solid #8f8d88; }
legend { margin-left: 6px; padding: 0 2px; }

.hours { display: flex; gap: 23px; padding: 12px 0 0 13px; }
.schedule { position: relative; width: 328px; }
.sky { display: flex; justify-content: space-between; margin: 0 -9px 0 63px; }
.sky svg { width: 18px; height: 18px; }
.scale { display: flex; margin: 0 -5px 0 67px; height: 13px; font: 11px/13px var(--mono); }
.scale span { display: flex; justify-content: center; flex: 1; width: 0; }
.scale span:nth-child(even) { font-weight: bold; }
.grid { width: 328px; height: 197px; table-layout: fixed; border-collapse: separate; border-spacing: 0; }
.grid .day { width: 72px; padding: 0; }
.grid th { padding: 0; font-weight: normal; border: 1px solid; border-color: #fff #8f8d88 #8f8d88 #fff; }
.grid .day button { width: 100%; line-height: 22px; text-align: center; }
.grid td { padding: 0; border: 1px solid #d4d0c8; border-width: 0 1px 1px 0; background: #fff; }
.grid .on { background: #00f; border-color: #a9a9ff; }
.grid .now { outline: 1px dotted #000; outline-offset: -1px; border: 2px solid #fff; }
.range { margin-top: 9px; }
.side { display: flex; flex-direction: column; gap: 5px; }
.side .btn { width: 80px; }
.side .btn--default { border: 2px solid #222; box-shadow: inset 1px 1px #fff, inset -1px -1px #808080; }
.legend { margin-top: 43px; }
.legend label { display: flex; align-items: center; height: 26px; }
.legend input { border-radius: 50%; border-width: 1px; margin: 0 4px 0 12px; }
.legend input:checked { background: radial-gradient(circle, #000 2px, #fff 3px); }
.swatch { width: 11px; height: 26px; border-left: 1px solid #808080; background: #fff; }
.swatch--on { background: #00f; border-bottom: 1px solid #8f8fff; }

.context {
  position: absolute;
  left: 101px;
  top: 227px;
  width: 137px;
  padding: 3px 3px 2px;
  border: 1px solid #8f8d88;
  border-width: 1px 2px 2px 1px;
  background: var(--face);
}
.context button { display: flex; align-items: center; width: 100%; height: 19px; padding: 0 5px 0 17px; }
.context .arrow { margin-left: auto; border-width: 4px 0 4px 5px; }
.rule { height: 10px; border-top: 4px solid transparent; background: linear-gradient(#8f8d88 1px, #fff 1px, #fff 2px, transparent 2px) padding-box; }

.statusbar { position: relative; display: flex; gap: 4px; height: 23px; padding: 1px 37px 2px 0; border-top: 1px solid #fff; border-bottom: 1px solid #fff; }
.statusbar span { border: 1px solid; border-color: #8f8d88 #fff #fff #8f8d88; }
.status-text { flex: 1; padding-left: 1px; }
.status-mid { width: 139px; }
.status-end { width: 10px; }
.ime { position: absolute; right: 4px; bottom: 1px; display: grid; place-items: center; width: 31px; height: 25px; border: 1px solid #8f8d88; border-width: 0 1px; border-left: 2px solid #8f8d88; background: var(--face); }
.ime svg { width: 18px; height: 16px; }

.taskbar { display: flex; align-items: center; height: 30px; padding-left: 2px; }
.start { display: flex; align-items: center; gap: 1px; width: 50px; height: 24px; padding-left: 2px; border: 2px solid; border-width: 1px 2px 2px 1px; border-color: #fff var(--dark) var(--dark) #fff; }
.grip { width: 3px; height: 20px; margin: 0 7px 0 8px; border: 1px solid; border-color: #fff #8f8d88 #8f8d88 #fff; }
.quick { display: flex; gap: 8px; width: 93px; }
.quick svg { width: 17px; height: 17px; }
.grip + .task { margin-left: -2px; }
.task { display: flex; align-items: center; gap: 4px; width: 172px; height: 24px; padding-left: 3px; border: 2px solid; border-width: 2px 1px 1px 2px; border-color: var(--dark) #fff #fff var(--dark); background: #ebe9e5; }
.tray { display: flex; align-items: center; gap: 4px; width: 73px; height: 24px; margin-left: auto; padding-left: 4px; border: 1px solid; border-color: #808080 transparent #fff #808080; }
.tray svg { width: 17px; height: 17px; }
.tray .net { margin-left: auto; }
.tray svg:last-child { margin-right: 6px; }
.chev { font-size: 15px; font-weight: bold; }
```
FILE: schedule.js
```js
const days = ['日', '一', '二', '三', '四', '五', '六'];
const scale = document.getElementById('scale');
for (let h = 0; h <= 24; h++) {
  const mark = document.createElement('span');
  mark.textContent = h % 2 ? '·' : String(h % 24);
  scale.append(mark);
}

const grid = document.getElementById('grid');
const head = grid.insertRow();
head.innerHTML = '<th class="day"><button>全部</button></th>' + '<th></th>'.repeat(24);
days.forEach((name, d) => {
  const row = grid.insertRow();
  row.innerHTML = `<th class="day"><button>星期${name}</button></th>`;
  for (let h = 0; h < 24; h++) {
    const cell = row.insertCell();
    if (d > 0 && d < 6 && h > 6 && h < 21) cell.className = 'on';
    if (d === 4 && h === 16) cell.classList.add('now');
  }
});
```
